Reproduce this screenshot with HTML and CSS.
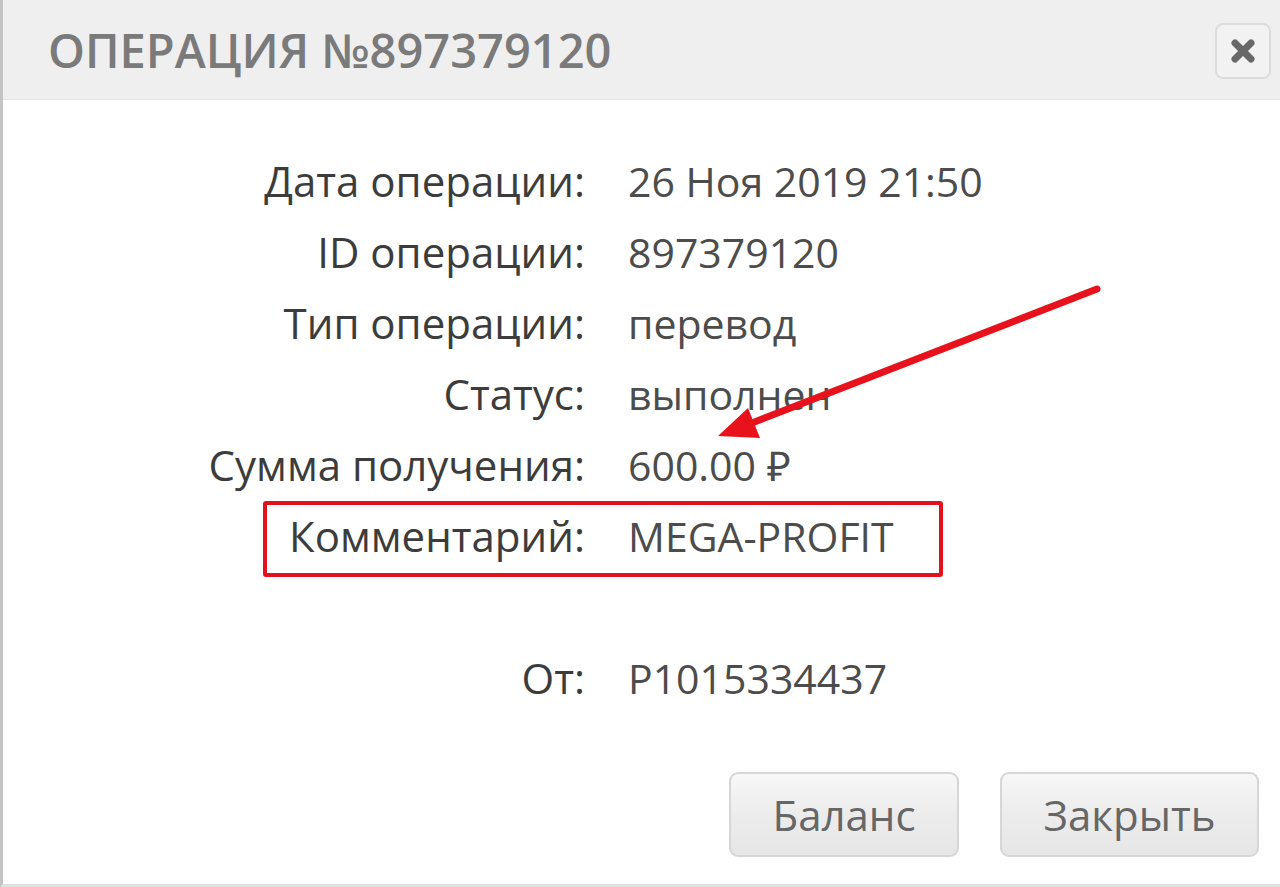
FILE: index.html
```html
<!DOCTYPE html>
<html lang="ru">
<head>
  <meta charset="UTF-8" />
  <title>Операция №897379120</title>
  <meta name="viewport" content="width=device-width, initial-scale=1" />
  <link rel="stylesheet" href="styles.css">
</head>
<body>
  <div class="modal">
    <div class="modal-header">
      <h1>ОПЕРАЦИЯ №897379120</h1>
      <button type="button" class="close" aria-label="Закрыть">
        <svg width="28" height="28" viewBox="0 0 28 28">
          <path d="M6 6 L22 22 M22 6 L6 22" stroke="#686868" stroke-width="7" stroke-linecap="round" />
        </svg>
      </button>
    </div>
    <div class="modal-body">
      <div class="details">
        <div class="label">Дата операции:</div>
        <div class="value">26 Ноя 2019 21:50</div>
        <div class="label">ID операции:</div>
        <div class="value">897379120</div>
        <div class="label">Тип операции:</div>
        <div class="value">перевод</div>
        <div class="label">Статус:</div>
        <div class="value">выполнен</div>
        <div class="label">Сумма получения:</div>
        <div class="value">600.00 ₽</div>
        <div class="label">Комментарий:</div>
        <div class="value">MEGA-PROFIT</div>
        <div class="label"></div>
        <div class="value"></div>
        <div class="label">От:</div>
        <div class="value">P1015334437</div>
      </div>
      <div class="highlight"></div>
      <svg class="arrow" width="1280" height="887" viewBox="0 0 1280 887">
        <line x1="1097" y1="289" x2="752" y2="423" stroke="#e8121c" stroke-width="7" stroke-linecap="round" />
        <polygon points="718,436 748,408 760,438" fill="#e8121c" />
      </svg>
    </div>
    <div class="modal-footer">
      <button type="button" class="btn">Баланс</button>
      <button type="button" class="btn btn-wide">Закрыть</button>
    </div>
  </div>
</body>
</html>
```

FILE: styles.css
```css
body {
  margin: 0;
  background-color: #fff;
  font-family: "Open Sans", Arial, sans-serif;
}
.modal {
  width: 1280px;
  height: 887px;
  box-sizing: border-box;
  border-left: 3px solid #c4c4c4;
  border-bottom: 3px solid #dde3e3;
  display: flex;
  flex-direction: column;
}
.modal-header {
  height: 100px;
  box-sizing: border-box;
  background-color: #efefef;
  border-bottom: 1px solid #e4e4e4;
  display: flex;
  align-items: center;
  justify-content: space-between;
  padding: 0 9px 0 45px;
}
.modal-header h1 {
  margin: 0;
  font-family: "Open Sans", sans-serif;
  font-weight: 600;
  font-size: 47px;
  color: #7a7a7a;
}
.close {
  width: 56px;
  height: 56px;
  border: 2px solid #dcdcdc;
  border-radius: 8px;
  background-color: #f2f2f2;
  padding: 0;
  margin-top: 2px;
  display: flex;
  align-items: center;
  justify-content: center;
}
.modal-body {
  flex: 1;
  padding-top: 45px;
  position: relative;
}
.details {
  display: grid;
  grid-template-columns: 582px 1fr;
  column-gap: 43px;
  grid-auto-rows: 71px;
  align-items: center;
}
.label {
  text-align: right;
  font-size: 42px;
  color: #3c3c3c;
}
.value {
  font-size: 41px;
  color: #4c4c4c;
}
.highlight {
  position: absolute;
  left: 260px;
  top: 401px;
  width: 672px;
  height: 68px;
  border: 4px solid #e3111e;
  border-radius: 3px;
}
.arrow {
  position: absolute;
  left: -3px;
  top: -100px;
}
.modal-footer {
  display: flex;
  justify-content: flex-end;
  gap: 41px;
  padding: 0 21px 27px 0;
}
.btn {
  width: 230px;
  height: 85px;
  border: 2px solid #d6d6d6;
  border-radius: 9px;
  background: linear-gradient(#f7f7f7, #ececec 50%, #e6e6e6);
  font-family: "Open Sans", Arial, sans-serif;
  font-size: 42px;
  color: #666;
}
.btn-wide {
  width: 259px;
}
```
